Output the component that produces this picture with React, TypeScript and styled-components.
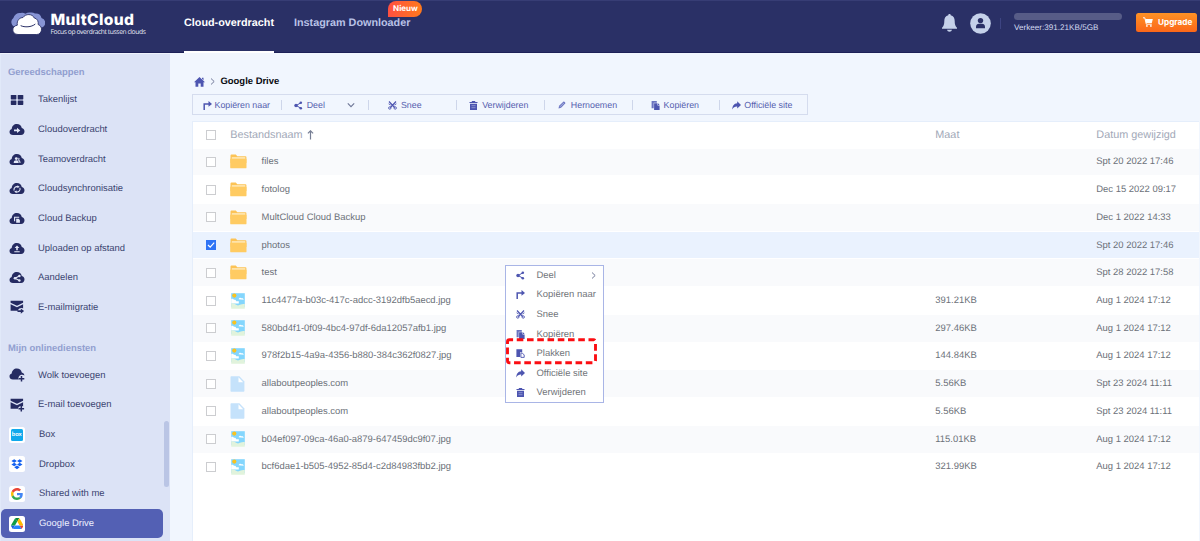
import React from "react";
import styled, { createGlobalStyle } from "styled-components";

const navy = "#252b62";
const indigo = "#4d55b0";

const GlobalStyle = createGlobalStyle`
  * { box-sizing: border-box; }
  body {
    margin: 0;
    font-family: "Liberation Sans", Arial, sans-serif;
    font-size: 9.45px;
    color: #6b7078;
    background: #f1f6fe;
    text-rendering: geometricPrecision;
    overflow: hidden;
  }
  svg { display: block; flex: none; }
`;

const Page = styled.div`
  position: relative;
  display: flex;
  flex-direction: column;
  width: 1200px;
  height: 541px;
  overflow: hidden;
`;

/* ---------- header ---------- */
const Header = styled.header`
  display: flex;
  flex: none;
  height: 53px;
  background: #2a3066;
  border-top: 1px solid #373d75;
  border-bottom: 1px solid #1d2158;
`;

const Brand = styled.div`
  display: flex;
  width: 184px;
  padding: 11px 0 0 11px;
  gap: 5.5px;
`;

const BrandText = styled.div`
  display: flex;
  flex-direction: column;
  white-space: nowrap;
`;

const BrandName = styled.div`
  font: 800 15.6px/15px Inter, sans-serif;
  letter-spacing: 0.35px;
  color: #fff;
`;

const Tagline = styled.div`
  font: 500 6.7px/10px "Open Sans", sans-serif;
  letter-spacing: -0.4px;
  color: #e9ebf6;
`;

const Nav = styled.nav`
  display: flex;
  gap: 20px;
  flex: 1;
`;

const NavItem = styled.div<{ $active?: boolean }>`
  position: relative;
  height: 52px;
  padding-top: 15px;
  font-size: 10.8px;
  line-height: 14px;
  font-weight: bold;
  white-space: nowrap;
  color: ${(p) => (p.$active ? "#fff" : "#b9c2e6")};
  border-bottom: 2.5px solid ${(p) => (p.$active ? "#fff" : "transparent")};
`;

const NewBadge = styled.span`
  position: absolute;
  left: 94.5px;
  top: 0;
  width: 34px;
  height: 16px;
  border-radius: 8px 8px 8px 0;
  background: linear-gradient(90deg, #ff4f41, #ff7a1c);
  color: #fff;
  font: 700 8px/15px Inter, sans-serif;
  text-align: center;
`;

const Account = styled.div`
  display: flex;
  align-items: flex-start;
  padding: 11px 3px 0 0;
`;

const BellSlot = styled.div`
  padding: 2px 13px 0 0;
`;

const AvatarSlot = styled.div`
  padding-top: 0.5px;
`;

const Divider = styled.div`
  width: 1px;
  height: 11px;
  margin: 6px 13px 0 9px;
  background: #3d4482;
`;

const Traffic = styled.div`
  width: 108px;
  margin: 1px 13.5px 0 0;
  font-size: 8.15px;
  line-height: 10px;
  color: #d2d9ef;
`;

const TrafficBar = styled.div`
  height: 7px;
  margin-bottom: 3px;
  border-radius: 4px;
  background: #575c87;
`;

const UpgradeButton = styled.button`
  display: flex;
  align-items: center;
  gap: 5px;
  width: 61.5px;
  height: 19px;
  margin-top: 1px;
  padding: 0 0 1px 7.5px;
  border: 0;
  border-radius: 2.5px;
  background: linear-gradient(#ff9225, #fb6719);
  color: #fff;
  font: 700 8.2px/12px Inter, sans-serif;
`;

/* ---------- sidebar ---------- */
const Body = styled.div`
  display: flex;
  flex: 1;
  min-height: 0;
`;

const Sidebar = styled.aside`
  position: relative;
  width: 170px;
  flex: none;
  background: #dce3f6;
  border-top: 1px solid #eef2fc;
  border-left: 1.5px solid #e1e9f9;
  white-space: nowrap;
`;

const SectionTitle = styled.div<{ $first?: boolean }>`
  height: ${(p) => (p.$first ? "30.8px" : "38px")};
  padding: ${(p) => (p.$first ? "13px" : "20.5px")} 0 0 7px;
  line-height: 12px;
  font-weight: bold;
  color: #929fd0;
`;

const SideItem = styled.div<{ $active?: boolean; $service?: boolean }>`
  display: flex;
  align-items: center;
  width: 162px;
  height: 29.7px;
  padding-left: 7.5px;
  gap: ${(p) => (p.$service ? "14px" : "13.5px")};
  border-radius: 5px;
  color: ${(p) => (p.$active ? "#eef0ff" : "#3b4470")};
  background: ${(p) => (p.$active ? "#5360b4" : "transparent")};
`;

const Tile = styled.span`
  display: flex;
  align-items: center;
  justify-content: center;
  width: 16.5px;
  height: 16px;
  border-radius: 2.5px;
  background: #fff;
`;

const BoxMark = styled.span`
  width: 12px;
  height: 12px;
  border-radius: 1.5px;
  background: #0fa9ec;
  color: #fff;
  font: 700 6px/11px Lato, sans-serif;
  text-align: center;
`;

const ScrollThumb = styled.div`
  position: absolute;
  right: 1px;
  top: 367px;
  width: 5.5px;
  height: 66px;
  border-radius: 3px;
  background: #bac5e5;
`;

/* ---------- main ---------- */
const Main = styled.main`
  flex: 1;
  min-width: 0;
  padding: 20.5px 1px 0 22px;
  display: flex;
  flex-direction: column;
`;

const Breadcrumb = styled.div`
  display: flex;
  align-items: center;
  gap: 4.5px;
  height: 16px;
  padding-left: 1.5px;
  font-weight: bold;
  color: #08090f;
`;

const Toolbar = styled.div`
  display: flex;
  width: 616px;
  height: 21px;
  margin-top: 4.5px;
  border: 1px solid #d5dcee;
  color: #5560ae;
  font-size: 8.85px;
`;

const ToolButton = styled.div<{ $pad: number; $gap?: number }>`
  position: relative;
  display: flex;
  align-items: center;
  width: 87.8px;
  padding: 1px 0 0 ${(p) => p.$pad}px;
  gap: ${(p) => p.$gap ?? 4}px;
  white-space: nowrap;
  &:not(:first-child)::before {
    content: "";
    position: absolute;
    left: 0;
    top: 5px;
    width: 1px;
    height: 10px;
    background: #ced6ea;
  }
`;

const PushRight = styled.span`
  margin: 0 13px 0 auto;
`;

const Table = styled.section`
  flex: 1;
  margin-top: 6px;
  border-top: 1px solid #e5eefb;
  border-left: 1.5px solid #e5eefb;
  background: #fff;
`;

const rowBg = { plain: "#fff", stripe: "#f9fafc", selected: "#eaf2fe" };

const Row = styled.div<{ $tone: keyof typeof rowBg; $head?: boolean }>`
  display: grid;
  grid-template-columns: 37.3px ${(p) => (p.$head ? "705px" : "31.3px 673.7px")} 161px 1fr;
  align-items: center;
  height: ${(p) => (p.$head ? 26.6 : 27.72)}px;
  background: ${(p) => rowBg[p.$tone]};
  font-size: ${(p) => (p.$head ? 10.85 : 9.45)}px;
  color: ${(p) => (p.$head ? "#a2a9b8" : "#6c7179")};
  border-bottom: ${(p) => (p.$head ? 0 : 0.5)}px solid #fff;
`;

const HeadCell = styled.div`
  display: flex;
  align-items: center;
  gap: 4px;
`;

const Check = styled.span<{ $on?: boolean }>`
  display: flex;
  align-items: center;
  justify-content: center;
  width: 10px;
  height: 10px;
  margin-left: 13px;
  border: 1px solid ${(p) => (p.$on ? "#2f74f5" : "#cccdd0")};
  background: ${(p) => (p.$on ? "#2f74f5" : "#fff")};
`;

/* ---------- context menu ---------- */
const Menu = styled.div`
  position: absolute;
  left: 505px;
  top: 264.6px;
  width: 98.5px;
  height: 138.6px;
  border: 1px solid #a9b5e6;
  background: #fff;
  color: #717479;
`;

const MenuItem = styled.div`
  display: flex;
  align-items: center;
  height: 19.55px;
  padding-left: 9.5px;
  gap: 12px;
  white-space: nowrap;
`;

const MenuChevron = styled.span`
  margin: 0 5.5px 0 auto;
`;

const Highlight = styled.svg`
  position: absolute;
  left: 506px;
  top: 338px;
`;

/* ---------- icons ---------- */
const Logo = () => (
  <svg width="34" height="23" viewBox="0 0 34 23">
    <path fill="#8794d4" d="M5 15a5 5 0 0 1-2.600-9 6.500 6.500 0 0 1 7-5 5.500 5.500 0 0 1 5 0.800A7 7 0 0 1 20 0.600a6.500 6.500 0 0 1 4 1A6 6 0 0 1 30.500 6a5 5 0 0 1 .5 9.500z" />
    <path fill="#fff" stroke="#2a3066" strokeWidth=".9" d="M7 22.500C0.500 22.500 0 14 6.300 13.200 5.500 8 9 5.600 12 5.500 14.500 1.500 21.500 1.500 23.300 6 26.500 6.500 27.600 9.500 27.200 12.500 32.500 14.500 31 22.500 25.800 22.500z" />
    <path d="M10 13.800c3.500 1.700 10.500 1.500 14-1.500" fill="none" stroke="#2a3066" strokeWidth="1" strokeLinecap="round" />
  </svg>
);

const Bell = () => (
  <svg width="15" height="18" viewBox="0 0 15 18">
    <path fill="#c5d1ea" d="M7.500 0c.8 0 1.200.5 1.200 1.300C11.500 2 12.700 4.200 12.700 7c0 3.300.6 5.200 2.300 6.800v.9H0v-.9C1.700 12.200 2.300 10.300 2.300 7c0-2.800 1.200-5 4-5.700C6.300.5 6.700 0 7.500 0zM5 15.700h5c-.3 1.300-1.200 2-2.500 2s-2.200-.7-2.500-2z" />
  </svg>
);

const Avatar = () => (
  <svg width="21" height="21" viewBox="0 0 21 21">
    <circle cx="10.500" cy="10.500" r="10.300" fill="#c5d1ea" />
    <circle cx="10.500" cy="7.600" r="2.700" fill="#2a3066" />
    <path fill="#2a3066" d="M6 15.300v-1.600c0-1.900 1.300-2.900 3-2.900h3c1.700 0 3 1 3 2.900v1.600z" />
  </svg>
);

const Cart = () => (
  <svg width="10" height="10" viewBox="0 0 10 10">
    <path fill="#fff" d="M2.300 1.900H9.800L8.800 6H3.100z" />
    <path d="M0 .8h1.800L3.300 7.200h5.500" fill="none" stroke="#fff" strokeWidth="1" />
    <circle cx="3.900" cy="8.900" r=".9" fill="#fff" />
    <circle cx="7.900" cy="8.900" r=".9" fill="#fff" />
  </svg>
);

const Tasks = () => (
  <svg width="16" height="12" viewBox="0 0 16 12">
    <g fill={navy}>
      <rect x="1.800" y="1" width="5.600" height="4.400" rx=".6" />
      <rect x="8.700" y="1" width="5.600" height="4.400" rx=".6" />
      <rect x="1.800" y="6.500" width="5.600" height="4.400" rx=".6" />
      <rect x="8.700" y="6.500" width="5.600" height="4.400" rx=".6" />
    </g>
  </svg>
);

const CloudIcon = ({ children }: { children?: React.ReactNode }) => (
  <svg width="16" height="13" viewBox="0 0 16 13">
    <path fill={navy} d="M4 12C1.900 12 .5 10.700.5 8.900c0-1.500.9-2.600 2.200-3C2.900 3.100 5 1 7.900 1c2.500 0 4.400 1.500 4.900 3.900 1.700.4 2.700 1.700 2.700 3.400C15.500 10.500 14 12 12 12z" />
    {children}
  </svg>
);

const line = { fill: "none", stroke: "#e4e9f8", strokeWidth: 1.1 };
const white = { fill: "#e4e9f8" };

const CloudArrow = () => (
  <CloudIcon><path {...white} d="M5 6.500h3V4.700l3.300 2.700L8 10V8.300H5z" /></CloudIcon>
);
const CloudTeam = () => (
  <CloudIcon>
    <circle {...white} cx="7.300" cy="5.600" r="1.400" />
    <path {...white} d="M4.700 10c0-2 1-2.700 2.600-2.700s2.400.7 2.400 2.700zM9.400 4.700c1.500 0 1.500 2.100.4 2.200 1.200.2 1.700 1.200 1.700 3.100h-1c0-1.300-.3-2-1.200-2.600z" />
  </CloudIcon>
);
const CloudSync = () => (
  <CloudIcon>
    <path {...line} d="M5.100 8.500a3 3 0 0 1 3.900-3.700M10.900 6a3 3 0 0 1-3.900 3.800" />
    <path {...white} d="M8.500 3.200l2.300 1.900-2.500 1zM7.500 11.300L5.200 9.400l2.500-1z" />
  </CloudIcon>
);
const CloudBackup = () => (
  <CloudIcon>
    <path {...line} d="M5.600 9.300V5.300h4.600" />
    <path {...white} d="M7.200 6.700h2.400l1.300 1.200v2.800H7.200z" />
  </CloudIcon>
);
const CloudUpload = () => (
  <CloudIcon><path {...white} d="M8 3.400l2.400 2.700H8.800v2.200H7.200V6.100H5.600zM5.300 9.200h5.400v1H5.300z" /></CloudIcon>
);
const CloudShare = () => (
  <CloudIcon>
    <path {...line} d="M10.300 5L6 7.200l4.300 2.200" />
    <circle {...white} cx="10.400" cy="5" r="1.200" />
    <circle {...white} cx="6" cy="7.200" r="1.300" />
    <circle {...white} cx="10.400" cy="9.500" r="1.200" />
  </CloudIcon>
);
const CloudAdd = () => (
  <svg width="16" height="14" viewBox="0 0 16 14">
    <path fill={navy} d="M4 11.500C1.900 11.500.5 10.200.5 8.400c0-1.500.9-2.500 2.200-2.900C2.900 2.600 5 .5 7.900.5c2.500 0 4.400 1.500 4.900 3.900 1.500.3 2.500 1.500 2.600 3-1.200-1-4.400-1.200-5.500 1-.8 1.500-.4 2.300-.1 3.100z" />
    <path d="M12.500 7.900v5.600M9.700 10.700h5.600" stroke={navy} strokeWidth="1.500" fill="none" />
  </svg>
);
const Mail = ({ add }: { add?: boolean }) => (
  <svg width="16" height="14" viewBox="0 0 16 14">
    <path fill={navy} d="M1.600.8h12.500v1.900L8 5.800 1.600 2.700zM1.600 4.300L8 7.300l6.100-3v4.100c-2.500-1-4.600-.2-5.200 2.400H1.600z" />
    {add ? (
      <path d="M12.300 8v5.500M9.500 10.700h5.600" stroke={navy} strokeWidth="1.500" fill="none" />
    ) : (
      <path fill={navy} d="M8.500 10.200h3.300V8.500l3.300 2.600-3.300 2.600V12H8.500z" />
    )}
  </svg>
);

const Dropbox = () => (
  <svg width="12" height="11" viewBox="0 0 12 11">
    <path fill="#1562f0" d="M3.200.2l2.700 1.700-2.700 1.800L.4 1.900zM8.700.2l2.800 1.700-2.800 1.800L6 1.900zM.4 5.500l2.800-1.800 2.700 1.800-2.700 1.700zM6 5.500l2.700-1.800 2.800 1.800-2.800 1.700zM3.200 8.300L6 6.500l2.700 1.800L6 10.200z" />
  </svg>
);
const GoogleG = () => (
  <svg width="12" height="12" viewBox="0 0 48 48">
    <path fill="#EA4335" d="M24 9.500c3.540 0 6.710 1.220 9.210 3.600l6.850-6.850C35.900 2.380 30.470 0 24 0 14.620 0 6.510 5.380 2.560 13.220l7.980 6.190C12.430 13.720 17.740 9.500 24 9.500z" />
    <path fill="#4285F4" d="M46.980 24.550c0-1.570-.15-3.090-.38-4.550H24v9.020h12.940c-.58 2.960-2.260 5.480-4.780 7.180l7.730 6c4.510-4.180 7.090-10.360 7.090-17.650z" />
    <path fill="#FBBC05" d="M10.530 28.590c-.48-1.450-.76-2.990-.76-4.590s.27-3.140.76-4.590l-7.980-6.190C.92 16.460 0 20.120 0 24c0 3.880.92 7.540 2.560 10.780l7.970-6.190z" />
    <path fill="#34A853" d="M24 48c6.480 0 11.930-2.130 15.890-5.810l-7.730-6c-2.150 1.450-4.920 2.300-8.160 2.300-6.260 0-11.570-4.220-13.470-9.910l-7.980 6.190C6.510 42.620 14.620 48 24 48z" />
  </svg>
);
const DriveLogo = () => (
  <svg width="12.500" height="11.200" viewBox="0 0 87.300 78">
    <path fill="#1a5fe0" d="M6.600 66.850l3.850 6.650c.8 1.400 1.950 2.500 3.300 3.300L27.500 53H0c0 1.550.4 3.100 1.200 4.500z" />
    <path fill="#0f9d45" d="M43.650 25L29.900 1.200c-1.350.8-2.500 1.900-3.300 3.300L1.200 48.500C.4 49.900 0 51.450 0 53h27.500z" />
    <path fill="#ea4335" d="M73.550 76.800c1.350-.8 2.500-1.900 3.300-3.300l9.250-16c.8-1.400 1.200-2.950 1.200-4.500H59.800l5.850 11.500z" />
    <path fill="#0a8438" d="M43.650 25L57.400 1.200C56.050.4 54.500 0 52.900 0H34.400c-1.600 0-3.150.45-4.500 1.200z" />
    <path fill="#2684fc" d="M59.800 53H27.500L13.750 76.800c1.350.8 2.900 1.200 4.500 1.200h50.800c1.600 0 3.150-.45 4.500-1.200z" />
    <path fill="#ffba00" d="M73.400 26.500L60.700 4.500c-.8-1.400-1.950-2.500-3.300-3.300L43.650 25 59.800 53h27.450c0-1.550-.4-3.100-1.200-4.500z" />
  </svg>
);

const Home = () => (
  <svg width="11" height="10" viewBox="0 0 11 10">
    <path fill={indigo} d="M5.500 0L11 5.200H9.500V9.800H6.700V6.500H4.300v3.300H1.500V5.200H0zM8 .7h1.500v2.500L8 1.800z" />
  </svg>
);
const Chevron = ({ down, size = 8 }: { down?: boolean; size?: number }) => (
  <svg width={size} height={size} viewBox="0 0 8 8">
    <path d={down ? "M.8 2.300L4 5.700l3.200-3.400" : "M2.300.6L5.900 4 2.300 7.400"} fill="none" stroke="#6f7797" strokeWidth="1.100" />
  </svg>
);
const CopyTo = () => (
  <svg width="9" height="9" viewBox="0 0 9 9">
    <path d="M1.200 9V2.900h5" fill="none" stroke={indigo} strokeWidth="1.500" />
    <path fill={indigo} d="M5.500 0L9 2.900 5.500 5.800z" />
  </svg>
);
const Share = () => (
  <svg width="9" height="9" viewBox="0 0 9 9">
    <path d="M7 1.700L2.200 4.500 7 7.300" fill="none" stroke={indigo} strokeWidth="1" />
    <g fill={indigo}>
      <circle cx="6.800" cy="1.700" r="1.300" />
      <circle cx="2" cy="4.500" r="1.700" />
      <circle cx="6.800" cy="7.300" r="1.300" />
    </g>
  </svg>
);
const Cut = () => (
  <svg width="9" height="9" viewBox="0 0 9 9">
    <path d="M1 .5l5.600 6M8 .5L2.400 6.500" fill="none" stroke={indigo} strokeWidth="1.200" />
    <g fill="none" stroke={indigo} strokeWidth=".9">
      <circle cx="1.800" cy="7" r="1.200" />
      <circle cx="7.200" cy="7" r="1.200" />
      <path d="M.6 2.800l2 1.200M8.400 2.800l-2 1.200" />
    </g>
  </svg>
);
const Trash = () => (
  <svg width="9" height="9" viewBox="0 0 9 9">
    <path fill={indigo} d="M3 0h3l.4.900h2.100v1.200h-8V.9h2.100zM1 2.700h7V9H1z" />
    <path d="M2.500 4.700h4M2.500 6.700h4" stroke="#b3bbe4" strokeWidth=".6" />
  </svg>
);
const Pencil = () => (
  <svg width="8" height="8" viewBox="0 0 8 8">
    <path fill="#6f79c4" d="M.5 7.500l.6-2.700L5.300.700c.7-.6 2.500.8 1.900 1.800L3.100 6.800z" />
    <path d="M2 5.800L5.800 2" stroke="#dfe4f6" strokeWidth=".5" />
  </svg>
);
const Copy = () => (
  <svg width="9" height="9" viewBox="0 0 9 9">
    <path fill="#6b74c0" d="M.6 0h5.200v1.700H2.700v5.600H.6z" />
    <path fill={indigo} d="M3.100 2.300h3.400v2.200h2.100V9H3.100zM7 2.300l1.600 1.600H7z" />
  </svg>
);
const Paste = () => (
  <svg width="9" height="9" viewBox="0 0 9 9">
    <path fill={indigo} d="M.4.300h5.800v2.900H4.100v4.800H.4z" />
    <path d="M4.900 4.100h1.500L8.200 6v2.400H4.900z" fill="#fff" stroke={indigo} strokeWidth=".9" />
  </svg>
);
const Forward = () => (
  <svg width="9" height="9" viewBox="0 0 9 9">
    <path fill={indigo} d="M5.200.3L9 3.900 5.200 7.500V5.500C3 5.400 1.500 6.200.2 8.500.4 5 1.800 2.500 5.200 2.200z" />
  </svg>
);

const SortArrow = () => (
  <svg width="7" height="10" viewBox="0 0 7 10">
    <path d="M3.500 9.600V1M.9 3.400L3.500.8l2.600 2.600" fill="none" stroke="#767e94" strokeWidth="1.200" />
  </svg>
);
const Tick = () => (
  <svg width="8" height="8" viewBox="0 0 8 8">
    <path d="M1 4l2.200 2.200L7.200 1.700" fill="none" stroke="#fff" strokeWidth="1.200" />
  </svg>
);

const FileIcon = ({ kind }: { kind: Kind }) => {
  if (kind === "folder")
    return (
      <svg width="17" height="15" viewBox="0 0 17 15">
        <path fill="#fcc356" d="M.5 1.500c0-.5.400-.9.900-.9h4.400l1.500 1.600h8.200c.5 0 .9.400.9.900V9H.5z" />
        <path fill="#fff1cf" d="M1.800 3.300h13.500V6H1.800z" />
        <path fill="#ffcb62" d="M.2 5.300c0-.5.300-.8.800-.8h14.700c.5 0 .8.300.8.800v8.100c0 .5-.4.900-.9.900H1.100c-.5 0-.9-.4-.9-.9z" />
      </svg>
    );
  if (kind === "page")
    return (
      <svg width="17" height="16" viewBox="0 0 17 16">
        <path fill="#c5e2fb" d="M1.200.3h8.200l5 5.200V15c0 .4-.3.700-.7.700H1.200c-.4 0-.7-.3-.7-.7V1c0-.4.300-.7.700-.7z" />
        <path fill="#fff" d="M8.500 1.300l4.700 4.900H8.500z" />
      </svg>
    );
  return (
    <svg width="17" height="16" viewBox="0 0 17 16">
      <path fill="#84d6fd" d="M1.200.2h13.600v14H1.200z" />
      <circle cx="4.300" cy="2.600" r="2.100" fill="#f9c221" />
      <path fill="#fff" d="M1.200 6.200c1.200-.8 2.300-.2 2.600.6 1.500-.3 2.400.4 2.400 1.500h2.600v2.100H1.200zM8.600 6.300c.2-1.700 2.200-2.100 2.900-1 1.200-.5 2.200.2 2.200 1.500z" />
      <path fill="#e1f3dc" d="M1.200 10.400c3.300-.3 4.800 1.800 6.800 2 2.500-.8 4-1.800 6.800-1.300v4.700H1.200z" />
    </svg>
  );
};

/* ---------- data ---------- */
type Kind = "folder" | "image" | "page";

const tools: [string, React.ReactNode][] = [
  ["Takenlijst", <Tasks />],
  ["Cloudoverdracht", <CloudArrow />],
  ["Teamoverdracht", <CloudTeam />],
  ["Cloudsynchronisatie", <CloudSync />],
  ["Cloud Backup", <CloudBackup />],
  ["Uploaden op afstand", <CloudUpload />],
  ["Aandelen", <CloudShare />],
  ["E-mailmigratie", <Mail />],
];

const adders: [string, React.ReactNode][] = [
  ["Wolk toevoegen", <CloudAdd />],
  ["E-mail toevoegen", <Mail add />],
];

const services: [string, React.ReactNode][] = [
  ["Box", <BoxMark>box</BoxMark>],
  ["Dropbox", <Dropbox />],
  ["Shared with me", <GoogleG />],
  ["Google Drive", <DriveLogo />],
];

const files: { name: string; kind: Kind; size?: string; date: string }[] = [
  { name: "files", kind: "folder", date: "Spt 20 2022 17:46" },
  { name: "fotolog", kind: "folder", date: "Dec 15 2022 09:17" },
  { name: "MultCloud Cloud Backup", kind: "folder", date: "Dec 1 2022 14:33" },
  { name: "photos", kind: "folder", date: "Spt 20 2022 17:46" },
  { name: "test", kind: "folder", date: "Spt 28 2022 17:58" },
  { name: "11c4477a-b03c-417c-adcc-3192dfb5aecd.jpg", kind: "image", size: "391.21KB", date: "Aug 1 2024 17:12" },
  { name: "580bd4f1-0f09-4bc4-97df-6da12057afb1.jpg", kind: "image", size: "297.46KB", date: "Aug 1 2024 17:12" },
  { name: "978f2b15-4a9a-4356-b880-384c362f0827.jpg", kind: "image", size: "144.84KB", date: "Aug 1 2024 17:12" },
  { name: "allaboutpeoples.com", kind: "page", size: "5.56KB", date: "Spt 23 2024 11:11" },
  { name: "allaboutpeoples.com", kind: "page", size: "5.56KB", date: "Spt 23 2024 11:11" },
  { name: "b04ef097-09ca-46a0-a879-647459dc9f07.jpg", kind: "image", size: "115.01KB", date: "Aug 1 2024 17:12" },
  { name: "bcf6dae1-b505-4952-85d4-c2d84983fbb2.jpg", kind: "image", size: "321.99KB", date: "Aug 1 2024 17:12" },
];

const selectedIndex = 3;

const menu: [string, React.ReactNode][] = [
  ["Deel", <Share />],
  ["Kopiëren naar", <CopyTo />],
  ["Snee", <Cut />],
  ["Kopiëren", <Copy />],
  ["Plakken", <Paste />],
  ["Officiële site", <Forward />],
  ["Verwijderen", <Trash />],
];

export default function App() {
  return (
    <Page>
      <GlobalStyle />
      <Header>
        <Brand>
          <Logo />
          <BrandText>
            <BrandName>MultCloud</BrandName>
            <Tagline>Focus op overdracht tussen clouds</Tagline>
          </BrandText>
        </Brand>
        <Nav>
          <NavItem $active>Cloud-overdracht</NavItem>
          <NavItem>
            Instagram Downloader
            <NewBadge>Nieuw</NewBadge>
          </NavItem>
        </Nav>
        <Account>
          <BellSlot><Bell /></BellSlot>
          <AvatarSlot><Avatar /></AvatarSlot>
          <Divider />
          <Traffic>
            <TrafficBar />
            Verkeer:391.21KB/5GB
          </Traffic>
          <UpgradeButton><Cart />Upgrade</UpgradeButton>
        </Account>
      </Header>
      <Body>
        <Sidebar>
          <SectionTitle $first>Gereedschappen</SectionTitle>
          {tools.map(([label, icon]) => (
            <SideItem key={label}>{icon}{label}</SideItem>
          ))}
          <SectionTitle>Mijn onlinediensten</SectionTitle>
          {adders.map(([label, icon]) => (
            <SideItem key={label}>{icon}{label}</SideItem>
          ))}
          {services.map(([label, icon]) => (
            <SideItem key={label} $service $active={label === "Google Drive"}>
              <Tile>{icon}</Tile>{label}
            </SideItem>
          ))}
          <ScrollThumb />
        </Sidebar>
        <Main>
          <Breadcrumb><Home /><Chevron size={7} />Google Drive</Breadcrumb>
          <Toolbar>
            <ToolButton $pad={9.5} $gap={3}><CopyTo />Kopiëren naar</ToolButton>
            <ToolButton $pad={13.5} $gap={3.5}><Share />Deel<PushRight><Chevron down /></PushRight></ToolButton>
            <ToolButton $pad={19.5}><Cut />Snee</ToolButton>
            <ToolButton $pad={13}><Trash />Verwijderen</ToolButton>
            <ToolButton $pad={14.5} $gap={4.5}><Pencil />Hernoemen</ToolButton>
            <ToolButton $pad={19.5} $gap={3.5}><Copy />Kopiëren</ToolButton>
            <ToolButton $pad={13} $gap={3}><Forward />Officiële site</ToolButton>
          </Toolbar>
          <Table>
            <Row $tone="plain" $head>
              <Check />
              <HeadCell>Bestandsnaam<SortArrow /></HeadCell>
              <span>Maat</span>
              <span>Datum gewijzigd</span>
            </Row>
            {files.map((f, i) => (
              <Row key={i} $tone={i === selectedIndex ? "selected" : i % 2 && i !== 4 ? "plain" : "stripe"}>
                <Check $on={i === selectedIndex}>{i === selectedIndex && <Tick />}</Check>
                <FileIcon kind={f.kind} />
                <span>{f.name}</span>
                <span>{f.size}</span>
                <span>{f.date}</span>
              </Row>
            ))}
          </Table>
        </Main>
      </Body>
      <Menu>
        {menu.map(([label, icon], i) => (
          <MenuItem key={label}>
            {icon}{label}
            {i === 0 && <MenuChevron><Chevron size={7} /></MenuChevron>}
          </MenuItem>
        ))}
      </Menu>
      <Highlight width="92" height="27" viewBox="0 0 92 27">
        <rect x="1.500" y="1.700" width="88" height="23" rx="2" fill="none" stroke="#fb0d12" strokeWidth="2.900" strokeDasharray="6.600 3.650" strokeDashoffset="3" />
      </Highlight>
    </Page>
  );
}
